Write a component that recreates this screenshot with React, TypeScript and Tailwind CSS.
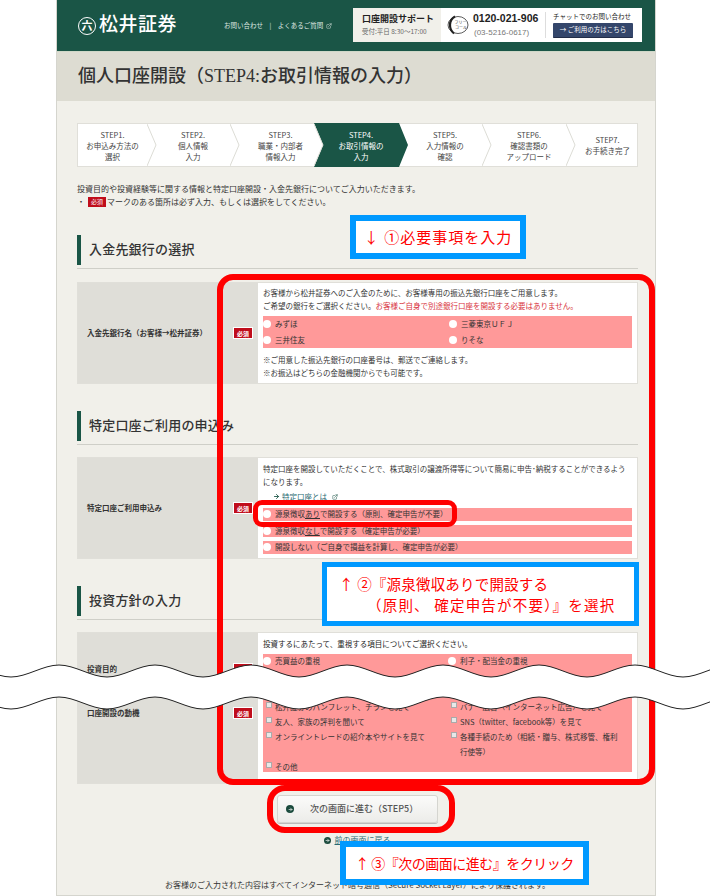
import { ArrowRight, ExternalLink } from "lucide-react";
import type { ReactNode } from "react";

const steps = [
  { lines: ["STEP1.", "お申込み方法の", "選択"], w: "w-[69px]", pl: "pl-0" },
  { lines: ["STEP2.", "個人情報", "入力"], w: "w-[83px]", pl: "pl-[9px]" },
  { lines: ["STEP3.", "職業・内部者", "情報入力"], w: "w-[84px]", pl: "pl-[17px]" },
  { lines: ["STEP4.", "お取引情報の", "入力"], w: "w-[84px]", pl: "pl-[10px]", active: true },
  { lines: ["STEP5.", "入力情報の", "確認"], w: "w-[84px]", pl: "pl-[10px]" },
  { lines: ["STEP6.", "確認書類の", "アップロード"], w: "w-[84px]", pl: "pl-[10px]" },
  { lines: ["STEP7.", "お手続き完了"], w: "w-[73px]", pl: "pl-[10px]", last: true },
];

function Badge() {
  return (
    <span className="flex h-[12px] w-[20px] shrink-0 items-center justify-center border border-white bg-[#c00d1b] text-[6px] font-bold text-white">
      必須
    </span>
  );
}

function Heading({ title }: { title: string }) {
  return (
    <div className="border-b border-[#cfcfc8] pb-[3px]">
      <div className="flex h-[30px] items-center border-l-[4px] border-[#1a5546] pl-[8px] font-['Liberation_Serif','Noto_Sans_CJK_JP',serif] text-[13px] font-medium tracking-[0.2px] text-[#333]">
        {title}
      </div>
    </div>
  );
}

function Radio({ children, className = "" }: { children: ReactNode; className?: string }) {
  return (
    <div className={`flex items-center gap-[4px] leading-[12.5px] ${className}`}>
      <span className="h-[8px] w-[8px] shrink-0 rounded-full bg-white" />
      <span>{children}</span>
    </div>
  );
}

function Check({ children, className = "" }: { children: ReactNode; className?: string }) {
  return (
    <div className={`flex items-start gap-[3px] leading-[15px] ${className}`}>
      <span className="mt-[3px] h-[6px] w-[6px] shrink-0 border border-[#aaa] bg-[#e8e8e8]" />
      <span>{children}</span>
    </div>
  );
}

function CircleArrow({ size }: { size: string }) {
  return (
    <span className={`flex ${size} items-center justify-center rounded-full bg-[#1a4a3c] text-white`}>
      <ArrowRight size={5} strokeWidth={3} />
    </span>
  );
}

function Wave() {
  // two wavy cut lines with white between them
  const line = (y: number) => {
    let d = `M-37 ${y}`;
    for (let x = -37; x < 740; x += 96) {
      d += ` C${x + 16} ${y} ${x + 32} ${y + 12} ${x + 48} ${y + 12}`;
      d += ` C${x + 64} ${y + 12} ${x + 80} ${y} ${x + 96} ${y}`;
    }
    return d;
  };
  const top = line(665);
  const bottom = line(697);
  return (
    <svg className="absolute left-0 top-0" width="710" height="896" viewBox="0 0 710 896" fill="none">
      <path d={`${top} L800 697 L-37 697 Z`} fill="#fff" />
      <path d={`${bottom} Z`} fill="#fff" />
      <path d={top} stroke="#222" strokeWidth="1" />
      <path d={bottom} stroke="#222" strokeWidth="1" />
    </svg>
  );
}

export default function App() {
  return (
    <div className="relative h-[896px] w-[710px] overflow-hidden bg-white font-['Noto_Sans_CJK_JP',sans-serif] text-[8px] text-[#333]">
      <div className="ml-[56px] flex h-[896px] w-[600px] flex-col border-x border-b border-[#d5d5ce] bg-[#f1f0ea]">
        {/* header */}
        <div className="flex h-[52px] shrink-0 items-center border-b border-[#cfd8c8] bg-[#1a5546] pl-[21px] text-white">
          <span className="flex h-[18px] w-[18px] items-center justify-center rounded-full border-[1.5px] border-white text-[11px] font-bold leading-none">
            六
          </span>
          <span className="ml-[3px] w-[125px] font-['Liberation_Serif','Noto_Sans_CJK_JP',serif] text-[19px] font-medium tracking-[0.5px]">
            松井証券
          </span>
          <span className="flex w-[129px] items-center gap-[3px] text-[6.5px] text-[#dfe8e2]">
            お問い合わせ　|　よくあるご質問
            <ExternalLink size={6} />
          </span>
          <div className="mb-[2px] flex h-[34px] w-[289px] bg-white text-[#222]">
            <div className="flex w-[88px] flex-col justify-center bg-[#f1f0ea] pl-[9px]">
              <span className="text-[9px] font-bold leading-[12px]">口座開設サポート</span>
              <span className="mt-[2px] text-[6.5px] leading-[9px] text-[#666]">受付:平日 8:30～17:00</span>
            </div>
            <div className="flex items-center pl-[6px]">
              <svg width="22" height="20" viewBox="0 0 22 20" fill="none">
                <ellipse cx="11" cy="10" rx="10" ry="8.5" stroke="#333" strokeWidth="0.8" />
                <path d="M8 1.5 C1.5 5 1.5 14 7 18.5" stroke="#222" strokeWidth="2.2" />
                <text x="7.5" y="9" fontSize="4" fill="#333">フリー</text>
                <text x="8" y="14" fontSize="4" fill="#333">コール</text>
              </svg>
            </div>
            <div className="ml-[4px] w-[72px] pt-[4px] font-['Liberation_Sans',sans-serif]">
              <div className="text-[10.5px] font-bold leading-[13px]">0120-021-906</div>
              <div className="mt-[2px] pl-[1px] text-[8px] leading-[11px] text-[#777]">(03-5216-0617)</div>
            </div>
            <div className="my-[4px] border-l border-[#ddd]" />
            <div className="ml-[7px] pt-[4px]">
              <div className="text-[6.5px] leading-[9px]">チャットでのお問い合わせ</div>
              <div className="mt-[2px] flex h-[15px] w-[80px] items-center justify-center rounded-[1px] border-b border-[#222d48] bg-[#34466b] text-[6.5px] text-white">
                → ご利用の方はこちら
              </div>
            </div>
          </div>
        </div>

        {/* title band */}
        <div className="flex h-[49px] shrink-0 items-center bg-[#dddcd2] pl-[21px] font-['Liberation_Serif','Noto_Sans_CJK_JP',serif] text-[18px] font-medium text-[#333]">
          個人口座開設（STEP4:お取引情報の入力）
        </div>

        <div className="ml-[20px] mr-[17px] flex-1">
          {/* steps */}
          <div className="mt-[22px] flex h-[44px] border border-[#e0dfd9] bg-white">
            {steps.map((s) => (
              <div key={s.lines[0]} className={`relative h-full shrink-0 ${s.w}`}>
                {s.active && (
                  <div className="absolute -bottom-px -top-px left-0 w-[94px] bg-[#1a5546] [clip-path:polygon(0_0,85px_0,94px_50%,85px_100%,0_100%,9px_50%)]" />
                )}
                <div
                  className={`relative flex h-full flex-col items-center justify-center ${s.pl} text-center text-[7.5px] leading-[11px] ${
                    s.active ? "text-white" : "text-[#444]"
                  }`}
                >
                  {s.lines.map((l) => (
                    <span key={l}>{l}</span>
                  ))}
                </div>
                {!s.active && !s.last && (
                  <svg className="absolute left-full top-0 z-10" width="10" height="42" viewBox="0 0 10 42" fill="none">
                    <path d="M0 0 L9 21 L0 42" stroke="#dcdcd6" strokeWidth="1" fill="#fff" />
                  </svg>
                )}
              </div>
            ))}
          </div>

          {/* intro */}
          <div className="mt-[15px] leading-[13px]">
            <p>投資目的や投資経験等に関する情報と特定口座開設・入金先銀行についてご入力いただきます。</p>
            <p className="flex items-center">
              <span className="mr-[3px]">・</span>
              <span className="mr-[1px] flex h-[10px] w-[18px] items-center justify-center bg-[#c00d1b] text-[6px] text-white">必須</span>
              マークのある箇所は必ず入力、もしくは選択をしてください。
            </p>
          </div>

          {/* bank */}
          <div className="mt-[27px]">
            <Heading title="入金先銀行の選択" />
          </div>
          <div className="mt-[13px] flex h-[102px] border border-[#e0dfd9] bg-white text-[7.5px]">
            <div className="flex w-[180px] shrink-0 items-center justify-between bg-[#dfded8] pl-[9px] pr-[5px]">
              <span className="font-bold">入金先銀行名（お客様→松井証券）</span>
              <Badge />
            </div>
            <div className="min-w-0 flex-1 pl-[5px] pr-[5px] pt-[3px] leading-[13px]">
              <p>お客様から松井証券へのご入金のために、お客様専用の振込先銀行口座をご用意します。</p>
              <p>
                ご希望の銀行をご選択ください。
                <span className="text-[#d8323c]">お客様ご自身で別途銀行口座を開設する必要はありません。</span>
              </p>
              <div className="mt-[4px] grid h-[32px] grid-cols-[186px_1fr] content-center gap-y-[3px] bg-[#ff9999]">
                <Radio>みずほ</Radio>
                <Radio>三菱東京ＵＦＪ</Radio>
                <Radio>三井住友</Radio>
                <Radio>りそな</Radio>
              </div>
              <p className="mt-[5px]">※ご用意した振込先銀行の口座番号は、郵送でご連絡します。</p>
              <p>※お振込はどちらの金融機関からでも可能です。</p>
            </div>
          </div>

          {/* tokutei */}
          <div className="mt-[27px]">
            <Heading title="特定口座ご利用の申込み" />
          </div>
          <div className="mt-[12px] flex h-[102px] border border-[#e0dfd9] bg-white text-[7.5px]">
            <div className="flex w-[180px] shrink-0 items-center justify-between bg-[#dfded8] pl-[9px] pr-[5px]">
              <span className="font-bold">特定口座ご利用申込み</span>
              <Badge />
            </div>
            <div className="min-w-0 flex-1 pl-[5px] pr-[5px] pt-[4px] leading-[13px]">
              <p>特定口座を開設していただくことで、株式取引の譲渡所得等について簡易に申告･納税することができるようになります。</p>
              <p className="mt-[2px] flex items-center gap-[2px] pl-[10px] text-[#2a6a72]">
                <ArrowRight size={7} strokeWidth={3} className="text-[#1a5546]" />
                <span className="underline">特定口座とは</span>
                <ExternalLink size={6} className="ml-[3px] text-[#1a5546]" />
              </p>
              <div className="mt-[5px] flex flex-col gap-[4px]">
                <Radio className="bg-[#ff9999]">
                  源泉徴収<u>あり</u>で開設する（原則、確定申告が不要）
                </Radio>
                <Radio className="bg-[#ff9999]">
                  源泉徴収<u>なし</u>で開設する（確定申告が必要）
                </Radio>
                <Radio className="bg-[#ff9999]">開設しない（ご自身で損益を計算し、確定申告が必要）</Radio>
              </div>
            </div>
          </div>

          {/* policy */}
          <div className="mt-[27px]">
            <Heading title="投資方針の入力" />
          </div>
          <div className="mt-[12px] flex h-[152px] border border-[#e0dfd9] bg-white text-[7.5px]">
            <div className="flex w-[180px] shrink-0 flex-col bg-[#dfded8] pl-[9px] pr-[5px] font-bold">
              <div className="flex h-[58px] items-start justify-between pt-[30px]">
                <span>投資目的</span>
                <Badge />
              </div>
              <div className="flex items-start justify-between pt-[16px]">
                <span>口座開設の動機</span>
                <Badge />
              </div>
            </div>
            <div className="flex min-w-0 flex-1 flex-col pl-[5px] pr-[5px] pt-[4px]">
              <p className="leading-[13px] text-[#222]">投資するにあたって、重視する項目についてご選択ください。</p>
              <div className="mt-[4px] h-[118px] bg-[#ff9999] pt-[1px]">
                <div className="grid h-[44px] grid-cols-[185px_1fr] content-start">
                  <Radio>売買益の重視</Radio>
                  <Radio>利子・配当金の重視</Radio>
                </div>
                <div className="grid grid-cols-[185px_1fr] pl-[3px]">
                  <Check>松井証券のパンフレット、チラシを見て</Check>
                  <Check>バナー広告（インターネット広告）を見て</Check>
                  <Check>友人、家族の評判を聞いて</Check>
                  <Check>SNS（twitter、facebook等）を見て</Check>
                  <Check>オンライントレードの紹介本やサイトを見て</Check>
                  <Check>
                    各種手続のため（相続・贈与、株式移管、権利
                    <br />
                    行使等）
                  </Check>
                </div>
                <div className="pl-[3px]">
                  <Check>その他</Check>
                </div>
              </div>
            </div>
          </div>

          {/* buttons */}
          <div className="mt-[11px] flex flex-col items-center">
            <div className="flex h-[28px] w-[161px] items-center rounded-[3px] border border-[#d5d5d0] bg-gradient-to-b from-[#fbfbfa] to-[#ecece9] pl-[8px] text-[9px] text-[#555] shadow-[0_1px_0_#bbb]">
              <CircleArrow size="h-[8px] w-[8px]" />
              <span className="ml-[16px] font-medium">次の画面に進む（STEP5）</span>
            </div>
            <div className="mt-[11px] flex items-center gap-[4px] pr-[1px] text-[#2a6a72]">
              <CircleArrow size="h-[7px] w-[7px]" />
              <span className="underline">前の画面に戻る</span>
            </div>
            <p className="mt-[33px] whitespace-nowrap">お客様のご入力された内容はすべてインターネット暗号通信（Secure Socket Layer）により保護されます。</p>
          </div>
        </div>
      </div>

      {/* annotations over the page */}
      <div className="absolute left-[217px] top-[274px] h-[511px] w-[438px] rounded-[16px] border-[6px] border-[#ff0000]" />
      <div className="absolute left-[253px] top-[500px] h-[27px] w-[204px] rounded-[9px] border-[5px] border-[#ff0000]" />
      <div className="absolute left-[267px] top-[785px] h-[48px] w-[188px] rounded-[18px] border-[6px] border-[#ff0000]" />

      <div className="absolute left-[350px] top-[215px] flex h-[44px] w-[176px] items-center justify-center border-[6px] border-[#0099ff] bg-white text-[15px] tracking-[1px] text-[#ff0000]">
        ↓ ①必要事項を入力
      </div>
      <div className="absolute left-[322px] top-[562px] h-[64px] w-[317px] border-[5px] border-[#0099ff] bg-white pl-[12px] pt-[6px] text-[14.5px] leading-[21px] text-[#ff0000]">
        <div className="tracking-[0.2px]">↑ ②『源泉徴収ありで開設する</div>
        <div className="pl-[28px] tracking-[1.2px]">（原則、 確定申告が不要）』を選択</div>
      </div>
      <div className="absolute left-[340px] top-[841px] flex h-[44px] w-[249px] items-center justify-center border-[6px] border-[#0099ff] bg-white text-[14px] tracking-[-0.5px] text-[#ff0000]">
        ↑ ③『次の画面に進む』をクリック
      </div>

      <Wave />
    </div>
  );
}
